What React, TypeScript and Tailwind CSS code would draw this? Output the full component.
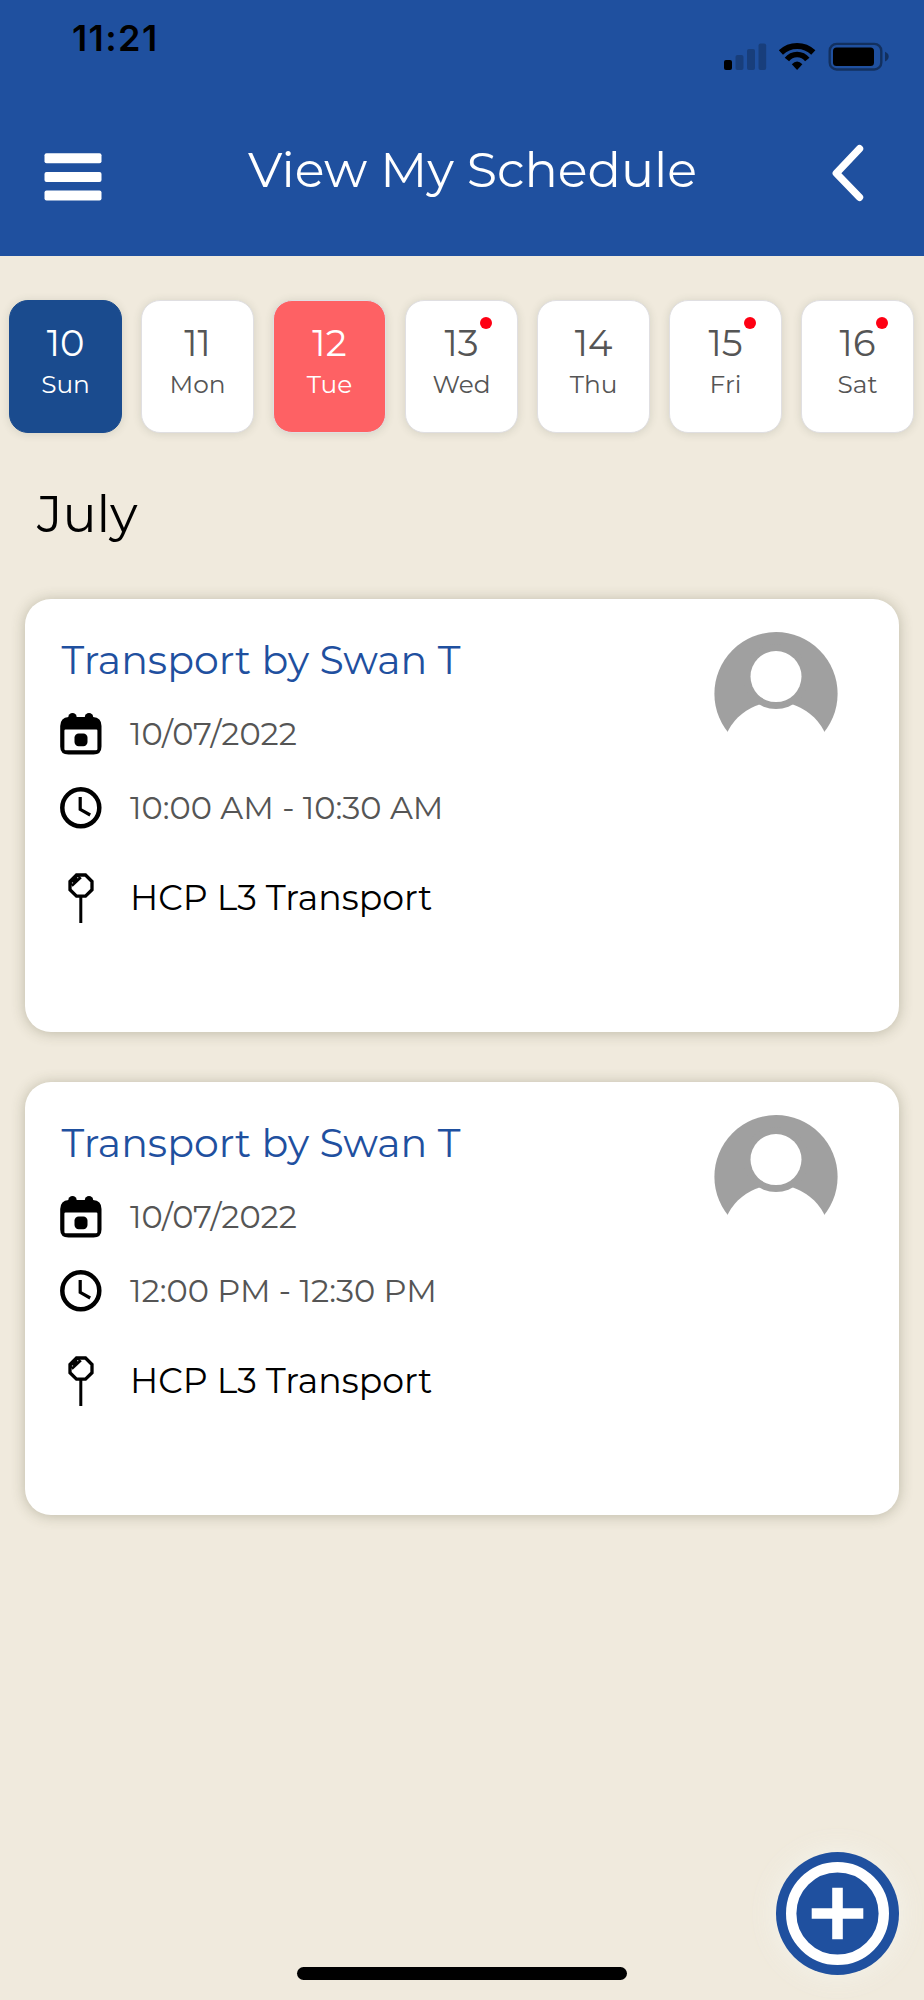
import React from 'react';

type Day = { date: number; name: string; state?: 'today' | 'selected'; hasEvent?: boolean };
type Booking = { id: number; title: string; date: string; time: string; place: string };

const days: Day[] = [
  { date: 10, name: 'Sun', state: 'selected' },
  { date: 11, name: 'Mon' },
  { date: 12, name: 'Tue', state: 'today' },
  { date: 13, name: 'Wed', hasEvent: true },
  { date: 14, name: 'Thu' },
  { date: 15, name: 'Fri', hasEvent: true },
  { date: 16, name: 'Sat', hasEvent: true },
];

const bookings: Booking[] = [
  { id: 1, title: 'Transport by Swan T', date: '10/07/2022', time: '10:00 AM - 10:30 AM', place: 'HCP L3 Transport' },
  { id: 2, title: 'Transport by Swan T', date: '10/07/2022', time: '12:00 PM - 12:30 PM', place: 'HCP L3 Transport' },
];

function StatusIcons() {
  return (
    <svg className="mt-[42px] h-[30px] w-[166px]" viewBox="0 0 166 30">
      <rect x="0" y="18" width="8" height="10" rx="2" />
      <g opacity="0.22">
        <rect x="11.5" y="13" width="8" height="15" rx="2" />
        <rect x="23" y="7" width="8" height="21" rx="2" />
        <rect x="34.5" y="1.5" width="7.7" height="26.5" rx="2" />
      </g>
      <g transform="translate(54.6 0)">
        <path d="M2.3 10.5A23.4 23.4 0 0 1 34.7 10.5" fill="none" stroke="#000" strokeWidth="6" />
        <path d="M8.3 17.4A13 13 0 0 1 28.7 17.4" fill="none" stroke="#000" strokeWidth="5.6" />
        <path d="M13.2 22.3Q18.5 16.8 23.8 22.3L18.5 28Z" />
      </g>
      <rect x="105.7" y="1.9" width="51.6" height="25.6" rx="7" fill="none" stroke="#000" strokeOpacity="0.4" strokeWidth="2.4" />
      <rect x="109" y="5.5" width="41" height="18.4" rx="3.5" />
      <path d="M161 9.8C163.6 11 164.7 12.5 164.7 14.6S163.6 18.4 161 19.6Z" opacity="0.4" />
    </svg>
  );
}

function MenuIcon() {
  return (
    <svg className="ml-[44px] mt-[13px] h-[48px] w-[58px]" viewBox="0 0 58 48" fill="#fff">
      <rect x="0.5" y="0.2" width="57" height="10" rx="2" />
      <rect x="0.5" y="18.9" width="57" height="10" rx="2" />
      <rect x="0.5" y="37.5" width="57" height="10" rx="2" />
    </svg>
  );
}

function BackIcon() {
  return (
    <svg className="mt-[4px] h-[58px] w-[34px]" viewBox="0 0 34 58" fill="none" stroke="#fff" strokeWidth="7.4" strokeLinecap="round" strokeLinejoin="round">
      <path d="M28.5 4.7L5.3 29.3L28.5 53.3" />
    </svg>
  );
}

function CalendarIcon() {
  return (
    <svg className="h-[42px] w-[42px] shrink-0" viewBox="0 0 42 42">
      <circle cx="12.5" cy="4.3" r="4.2" />
      <circle cx="29" cy="4.3" r="4.2" />
      <path fillRule="evenodd" d="M8.5 4H33Q41.5 4.5 41.5 13V33.5Q41.5 41.5 33.5 41.5H8.5Q0.2 41.5 0.2 33.5V13Q0.5 4.5 8.5 4ZM5.5 16.5Q4.4 16.5 4.4 17.5V36Q4.4 37.2 5.6 37.2H36Q37.4 37.2 37.4 36V17.5Q37.4 16.5 36.4 16.5Z" />
      <rect x="14.5" y="20.4" width="13" height="12.8" rx="4.2" />
    </svg>
  );
}

function ClockIcon() {
  return (
    <svg className="h-[42px] w-[42px] shrink-0" viewBox="0 0 42 42" fill="none" stroke="#000">
      <circle cx="20.8" cy="20.8" r="18.5" strokeWidth="4.5" />
      <path d="M20.2 10V22.4L30.2 28" strokeWidth="3.2" />
    </svg>
  );
}

function PinIcon() {
  return (
    <svg className="h-[50px] w-[42px] shrink-0" viewBox="0 0 42 50" fill="none" stroke="#000">
      <path d="M10 8.5L16.5 2H25.5L32 8.5V16.8L25.5 23.2H16.5L10 16.800Z" strokeWidth="3.3" />
      <path d="M10.800 11.800L19.800 3.200" strokeWidth="5.600" />
      <path d="M11.900 9.800h1.200M17.100 4.600h1.200" stroke="#aaa" strokeWidth="1.200" />
      <path d="M20.800 23V50" strokeWidth="3" />
    </svg>
  );
}

function Avatar() {
  return (
    <svg className="h-[124px] w-[124px] shrink-0" viewBox="0 0 124 124">
      <circle cx="62" cy="61.700" r="61.600" fill="#a0a0a0" />
      <circle cx="62" cy="123.800" r="54" fill="#fff" />
      <circle cx="62" cy="44.600" r="32.500" fill="#a0a0a0" />
      <circle cx="62" cy="44.600" r="25.500" fill="#fff" />
    </svg>
  );
}

function DayTile({ day }: { day: Day }) {
  const tone =
    day.state === 'selected'
      ? 'border-[#1a4b8e] bg-[#1a4b8e] text-white'
      : day.state === 'today'
        ? 'border-[#e0dfe2] bg-[#fe6164] text-white'
        : 'border-[#e0dfe2] bg-white text-[#555]';
  return (
    <div className={`relative flex h-[133px] w-[113px] flex-col items-center rounded-[19px] border-[1.5px] pt-[20px] shadow-[0_1px_9px_rgba(70,80,60,0.16)] ${tone}`}>
      <span className="text-[36.9px] leading-[44px]">{day.date}</span>
      <span className="mt-[4px] text-[24.8px] leading-[30px]">{day.name}</span>
      {day.hasEvent && <span className="absolute right-[25px] top-[15.5px] size-[12px] rounded-full bg-[#fe0013]" />}
    </div>
  );
}

function BookingCard({ booking }: { booking: Booking }) {
  return (
    <article className="flex h-[433px] justify-between rounded-[26px] bg-white pl-[35px] pr-[61px] shadow-[0_1px_14px_rgba(70,70,40,0.3)]">
      <div className="pt-[37px]">
        <h2 className="pl-[1.5px] text-[39.5px] leading-[48px] text-[#1f509f]">{booking.title}</h2>
        <div className="mt-[29px] flex gap-7 text-[32px] leading-[42px] text-[#555]">
          <CalendarIcon />
          <span>{booking.date}</span>
        </div>
        <div className="mt-[32px] flex gap-7 text-[32px] leading-[42px] text-[#555]">
          <ClockIcon />
          <span>{booking.time}</span>
        </div>
        <div className="mt-[44px] flex gap-7 text-[34.7px] leading-[42px] text-black">
          <PinIcon />
          <span className="mt-[4px]">{booking.place}</span>
        </div>
      </div>
      <div className="pt-[33px]">
        <Avatar />
      </div>
    </article>
  );
}

export default function App() {
  return (
    <div className="relative h-[2000px] w-[924px] overflow-hidden bg-[#f0eadd] font-['Montserrat','Inter',sans-serif] whitespace-nowrap">
      <header className="flex h-[256px] flex-col bg-[#1f509f]">
        <div className="flex h-[140px] items-start justify-between pl-[72px] pr-[34px]">
          <span className="mt-[18px] font-['Inter',sans-serif] text-[36px] font-semibold leading-[40px] tracking-[1.4px] text-black">11:21</span>
          <StatusIcons />
        </div>
        <div className="flex items-start justify-between pr-[59px]">
          <MenuIcon />
          <h1 className="-mt-px ml-[12px] text-[49.25px] leading-[60px] text-white">View My Schedule</h1>
          <BackIcon />
        </div>
      </header>

      <section className="mt-[44px] flex justify-between pl-[9px] pr-[10px]">
        {days.map((d) => (
          <DayTile key={d.date} day={d} />
        ))}
      </section>

      <p className="ml-[37px] mt-[51px] text-[50.8px] leading-[60px] text-black">July</p>

      <main className="mt-[55px] flex flex-col gap-[50px] px-[25px]">
        {bookings.map((b) => (
          <BookingCard key={b.id} booking={b} />
        ))}
      </main>

      <button aria-label="Add booking" className="absolute left-[776px] top-[1852px] size-[123px] rounded-full shadow-[0_0_28px_rgba(244,244,236,0.9)]">
        <svg className="size-full" viewBox="0 0 123 123">
          <circle cx="61.5" cy="61.5" r="61.5" fill="#1f509f" />
          <circle cx="61.5" cy="61.5" r="46.3" fill="none" stroke="#fff" strokeWidth="10.4" />
          <path d="M35.7 61.5H87.3M61.5 35.7V87.3" stroke="#fff" strokeWidth="10.6" />
        </svg>
      </button>
      <div className="absolute left-[297px] top-[1967px] h-[13px] w-[330px] rounded-full bg-black" />
    </div>
  );
}
